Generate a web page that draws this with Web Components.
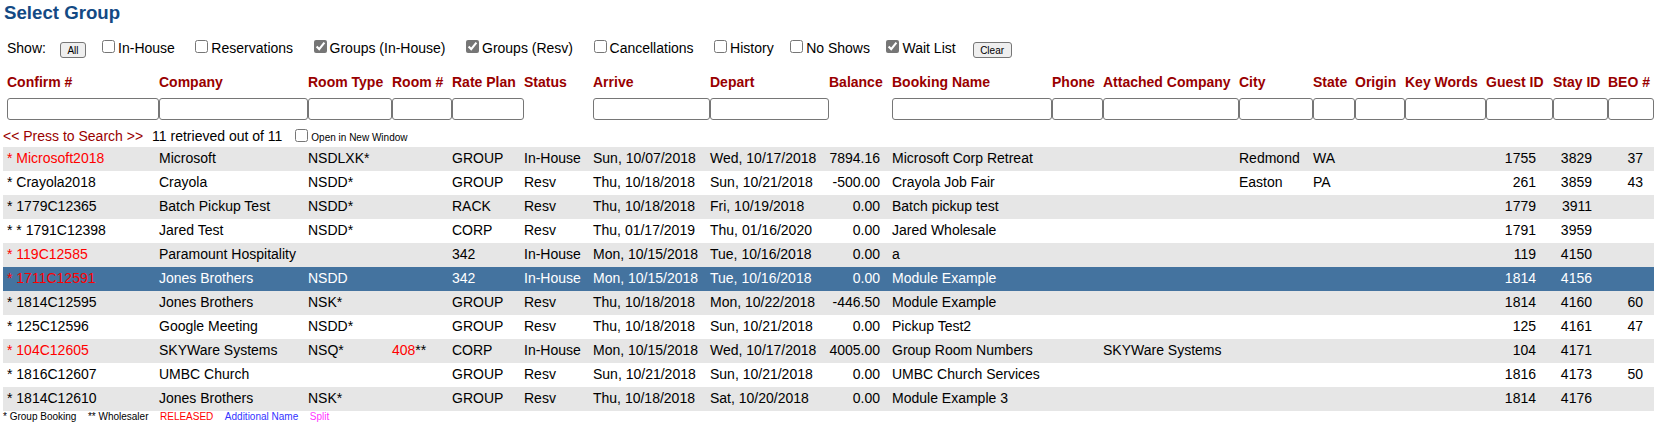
<!DOCTYPE html>
<html lang="en">
<head>
<meta charset="utf-8">
<title>Select Group</title>
<style>
  html, body { margin: 0; padding: 0; background: #fff; overflow: hidden; }
  body { font-family: "Liberation Sans", Arial, sans-serif; font-size: 14px; color: #000; }
</style>
</head>
<body>
<select-group>
  <span slot="title">Select Group</span>
  <show-filters slot="filters">
    <small-btn slot="all">All</small-btn>
    <filter-check>In-House</filter-check>
    <filter-check>Reservations</filter-check>
    <filter-check checked>Groups (In-House)</filter-check>
    <filter-check checked>Groups (Resv)</filter-check>
    <filter-check>Cancellations</filter-check>
    <filter-check tight>History</filter-check>
    <filter-check tight>No Shows</filter-check>
    <filter-check checked>Wait List</filter-check>
    <small-btn slot="clear">Clear</small-btn>
  </show-filters>
  <group-table slot="table"></group-table>
  <group-legend slot="legend"></group-legend>
</select-group>

<script>
const html = String.raw
const css = String.raw

const COLS = '152px 149px 84px 60px 72px 69px 117px 119px 63px 160px 51px 136px 74px 42px 50px 81px 67px 55px 46px'

const HEADERS = ['Confirm #', 'Company', 'Room Type', 'Room #', 'Rate Plan', 'Status', 'Arrive', 'Depart', 'Balance',
  'Booking Name', 'Phone', 'Attached Company', 'City', 'State', 'Origin', 'Key Words', 'Guest ID', 'Stay ID', 'BEO #']

// no search box over Status and Balance
const NO_INPUT = ['Status', 'Balance']

const ROWS = [
  { red: 1, c: ['* Microsoft2018', 'Microsoft', 'NSDLXK*', '', 'GROUP', 'In-House', 'Sun, 10/07/2018', 'Wed, 10/17/2018', '7894.16', 'Microsoft Corp Retreat', '', '', 'Redmond', 'WA', '', '', '1755', '3829', '37'] },
  { c: ['* Crayola2018', 'Crayola', 'NSDD*', '', 'GROUP', 'Resv', 'Thu, 10/18/2018', 'Sun, 10/21/2018', '-500.00', 'Crayola Job Fair', '', '', 'Easton', 'PA', '', '', '261', '3859', '43'] },
  { c: ['* 1779C12365', 'Batch Pickup Test', 'NSDD*', '', 'RACK', 'Resv', 'Thu, 10/18/2018', 'Fri, 10/19/2018', '0.00', 'Batch pickup test', '', '', '', '', '', '', '1779', '3911', ''] },
  { c: ['* * 1791C12398', 'Jared Test', 'NSDD*', '', 'CORP', 'Resv', 'Thu, 01/17/2019', 'Thu, 01/16/2020', '0.00', 'Jared Wholesale', '', '', '', '', '', '', '1791', '3959', ''] },
  { red: 1, c: ['* 119C12585', 'Paramount Hospitality', '', '', '342', 'In-House', 'Mon, 10/15/2018', 'Tue, 10/16/2018', '0.00', 'a', '', '', '', '', '', '', '119', '4150', ''] },
  { red: 1, selected: 1, c: ['* 1711C12591', 'Jones Brothers', 'NSDD', '', '342', 'In-House', 'Mon, 10/15/2018', 'Tue, 10/16/2018', '0.00', 'Module Example', '', '', '', '', '', '', '1814', '4156', ''] },
  { c: ['* 1814C12595', 'Jones Brothers', 'NSK*', '', 'GROUP', 'Resv', 'Thu, 10/18/2018', 'Mon, 10/22/2018', '-446.50', 'Module Example', '', '', '', '', '', '', '1814', '4160', '60'] },
  { c: ['* 125C12596', 'Google Meeting', 'NSDD*', '', 'GROUP', 'Resv', 'Thu, 10/18/2018', 'Sun, 10/21/2018', '0.00', 'Pickup Test2', '', '', '', '', '', '', '125', '4161', '47'] },
  { red: 1, room: ['408', '**'], c: ['* 104C12605', 'SKYWare Systems', 'NSQ*', '', 'CORP', 'In-House', 'Mon, 10/15/2018', 'Wed, 10/17/2018', '4005.00', 'Group Room Numbers', '', 'SKYWare Systems', '', '', '', '', '104', '4171', ''] },
  { c: ['* 1816C12607', 'UMBC Church', '', '', 'GROUP', 'Resv', 'Sun, 10/21/2018', 'Sun, 10/21/2018', '0.00', 'UMBC Church Services', '', '', '', '', '', '', '1816', '4173', '50'] },
  { c: ['* 1814C12610', 'Jones Brothers', 'NSK*', '', 'GROUP', 'Resv', 'Thu, 10/18/2018', 'Sat, 10/20/2018', '0.00', 'Module Example 3', '', '', '', '', '', '', '1814', '4176', ''] },
]

class SelectGroup extends HTMLElement {
  constructor() {
    super()
    const root = this.attachShadow({ mode: 'open' })
    root.innerHTML = html`
      <style>${css`
        :host { display: block; width: 1654px; }
        h1 {
          margin: 0;
          padding-left: 4px;
          height: 36px;
          line-height: 26px;
          font-size: 18.67px;
          font-weight: bold;
          color: #134a84;
        }
      `}</style>
      <h1><slot name="title"></slot></h1>
      <slot name="filters"></slot>
      <slot name="table"></slot>
      <slot name="legend"></slot>
    `
  }
}

class SmallBtn extends HTMLElement {
  constructor() {
    super()
    const root = this.attachShadow({ mode: 'open' })
    root.innerHTML = html`
      <style>${css`
        :host { display: inline-block; margin-top: 4px; }
        button {
          display: block;
          height: 16px;
          padding: 0 6.5px;
          font: 10px "Liberation Sans", Arial, sans-serif;
          color: #000;
          background: #efefef;
          border: 1px solid #767676;
          border-radius: 3px;
        }
      `}</style>
      <button><slot></slot></button>
    `
  }
}

class FilterCheck extends HTMLElement {
  constructor() {
    super()
    const root = this.attachShadow({ mode: 'open' })
    root.innerHTML = html`
      <style>${css`
        :host { display: inline-block; }
        :host([tight]) { margin-right: -4px; }
        label { display: flex; align-items: center; gap: 3px; white-space: nowrap; }
        input { margin: 0; width: 13px; height: 13px; accent-color: #767676; position: relative; top: -2px; }
      `}</style>
      <label><input type="checkbox"><span><slot></slot></span></label>
    `
    root.querySelector('input').checked = this.hasAttribute('checked')
  }
}

class ShowFilters extends HTMLElement {
  constructor() {
    super()
    const root = this.attachShadow({ mode: 'open' })
    root.innerHTML = html`
      <style>${css`
        :host { display: flex; align-items: center; height: 24px; padding-left: 7px; margin-bottom: 10px; }
        .show { margin-right: 14px; }
        .checks { display: flex; gap: 20.5px; margin: 0 17px 0 16px; }
      `}</style>
      <span class="show">Show:</span>
      <slot name="all"></slot>
      <div class="checks"><slot></slot></div>
      <slot name="clear"></slot>
    `
  }
}

class GroupRow extends HTMLElement {
  constructor() {
    super()
    const root = this.attachShadow({ mode: 'open' })
    root.innerHTML = html`
      <style>${css`
        :host {
          display: grid;
          grid-template-columns: ${COLS};
          height: 24px;
          line-height: 23px;
          margin-left: 3px;
          padding-left: 4px;
          background: #fff;
          white-space: nowrap;
        }
        :host(.shade) { background: #e6e6e6; }
        :host(.selected) { background: #44739f; color: #fff; }
        .red { color: #f00; }
        .bal { text-align: right; padding-right: 12px; }
        .id { text-align: right; padding-right: 17px; }
        .id.stay { padding-right: 16px; }
        .id.beo { padding-right: 11px; }
      `}</style>
    `
  }

  set row(row) {
    row.c.forEach((text, i) => {
      const cell = document.createElement('div')
      cell.textContent = text
      if (i === 0 && row.red) cell.className = 'red'
      if (i === 3 && row.room) {
        cell.innerHTML = `<span class="red">${row.room[0]}</span>${row.room[1]}`
      }
      if (i === 8) cell.className = 'bal'
      if (i === 16) cell.className = 'id'
      if (i === 17) cell.className = 'id stay'
      if (i === 18) cell.className = 'id beo'
      this.shadowRoot.appendChild(cell)
    })
  }
}

class GroupTable extends HTMLElement {
  constructor() {
    super()
    const root = this.attachShadow({ mode: 'open' })
    root.innerHTML = html`
      <style>${css`
        :host { display: block; }
        .cols { display: grid; grid-template-columns: ${COLS}; padding-left: 7px; }
        .head { height: 28px; line-height: 24px; font-weight: bold; color: #990000; white-space: nowrap; }
        .filter { height: 22px; }
        .filter input {
          display: block;
          box-sizing: border-box;
          width: 100%;
          height: 22px;
          margin: 0;
          border: 1px solid #767676;
          border-radius: 3px;
          background: #fff;
        }
        .search { display: flex; align-items: center; height: 27px; padding: 5px 0 0 3px; box-sizing: border-box; white-space: nowrap; }
        .press { color: #990000; margin-right: 9px; }
        .search input { margin: 0 3px 0 13px; width: 13px; height: 13px; position: relative; top: -1px; }
        .open { font-size: 10px; position: relative; top: 1px; }
      `}</style>
      <div class="cols head">${HEADERS.map(h => `<div>${h}</div>`).join('')}</div>
      <div class="cols filter">${HEADERS.map(h => NO_INPUT.includes(h) ? '<div></div>' : '<div><input type="text"></div>').join('')}</div>
      <div class="search">
        <span class="press">&lt;&lt; Press to Search &gt;&gt;</span>
        <span>11 retrieved out of 11</span>
        <input type="checkbox"><span class="open">Open in New Window</span>
      </div>
      <div id="rows"></div>
    `
    const rows = root.querySelector('#rows')
    ROWS.forEach((row, i) => {
      const el = document.createElement('group-row')
      el.row = row
      if (row.selected) el.classList.add('selected')
      else if (i % 2 === 0) el.classList.add('shade')
      rows.appendChild(el)
    })
  }
}

class GroupLegend extends HTMLElement {
  constructor() {
    super()
    const root = this.attachShadow({ mode: 'open' })
    root.innerHTML = html`
      <style>${css`
        :host { display: flex; gap: 11.5px; height: 12px; line-height: 12px; padding-left: 3px; font-size: 10px; white-space: nowrap; }
      `}</style>
      <span>* Group Booking</span>
      <span>** Wholesaler</span>
      <span style="color:#f00">RELEASED</span>
      <span style="color:#33f">Additional Name</span>
      <span style="color:#f3f">Split</span>
    `
  }
}

customElements.define('small-btn', SmallBtn)
customElements.define('filter-check', FilterCheck)
customElements.define('show-filters', ShowFilters)
customElements.define('group-row', GroupRow)
customElements.define('group-table', GroupTable)
customElements.define('group-legend', GroupLegend)
customElements.define('select-group', SelectGroup)
</script>
</body>
</html>
